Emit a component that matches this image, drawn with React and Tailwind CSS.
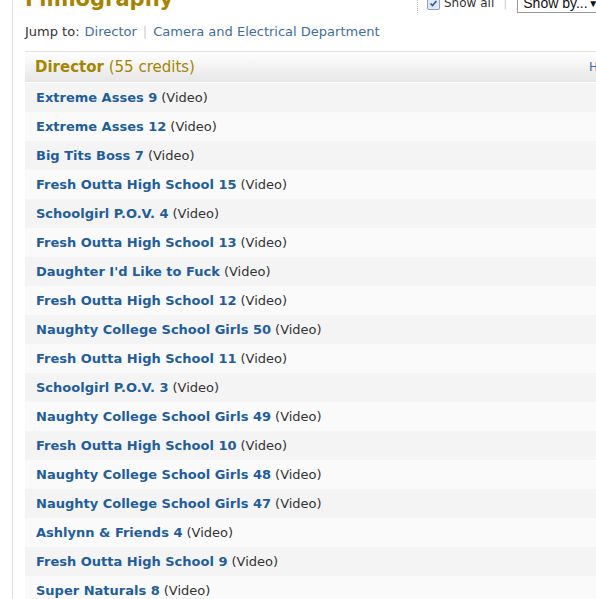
import React from "react";

const credits = [
  "Extreme Asses 9",
  "Extreme Asses 12",
  "Big Tits Boss 7",
  "Fresh Outta High School 15",
  "Schoolgirl P.O.V. 4",
  "Fresh Outta High School 13",
  "Daughter I'd Like to Fuck",
  "Fresh Outta High School 12",
  "Naughty College School Girls 50",
  "Fresh Outta High School 11",
  "Schoolgirl P.O.V. 3",
  "Naughty College School Girls 49",
  "Fresh Outta High School 10",
  "Naughty College School Girls 48",
  "Naughty College School Girls 47",
  "Ashlynn & Friends 4",
  "Fresh Outta High School 9",
  "Super Naturals 8",
];

export default function App() {
  return (
    <div className="h-[599px] w-[596px] overflow-hidden bg-white font-['DejaVu_Sans',Verdana,sans-serif]">
      <div className="ml-[12px] h-full border-l border-[#e4e4e4] pl-[12px]">
        <div className="relative flex h-[20px] items-end">
          <h1 className="absolute top-[-13px] left-0 text-[21px] font-bold leading-[24px] text-[#a58500]">
            Filmography
          </h1>
          <div className="absolute top-[-7px] left-[392px] flex items-center whitespace-nowrap border-l border-dotted border-[#bbb] pl-[9px]">
            <span className="flex h-[13px] w-[13px] items-center justify-center rounded-[2px] border border-[#8ba4c6] bg-[#dfe9f5]">
              <svg width="9" height="9" viewBox="0 0 9 9">
                <path d="M1.5 4.5 L3.5 6.5 L7.5 2" stroke="#2a5a9a" strokeWidth="1.6" fill="none" />
              </svg>
            </span>
            <span className="ml-[4px] text-[12px] text-[#333]">Show all</span>
            <span className="ml-[9px] text-[12px] text-[#ccc]">|</span>
            <span className="ml-[10px] flex h-[20px] w-[84px] items-center justify-between border border-[#999] bg-white pl-[5px] pr-[2px] text-[14px] text-[#111] font-['Liberation_Sans',Arial,sans-serif]">
              Show by...
              <span className="text-[10px]">▼</span>
            </span>
          </div>
        </div>
        <div className="flex h-[23px] items-center whitespace-nowrap text-[13px] text-[#333]">
          <span>Jump to:</span>
          <a className="ml-[5px] text-[#3b6ea6]">Director</a>
          <span className="mx-[6px] text-[#ccc]">|</span>
          <a className="text-[#3b6ea6]">Camera and Electrical Department</a>
        </div>
        <div className="mt-[8px] border-t border-[#e0e0e0]">
          <div className="flex h-[30px] items-center justify-between bg-gradient-to-b from-white to-[#e6e6e6] pl-[10px]">
            <div className="text-[15px] text-[#a58500]">
              <span className="font-bold">Director</span> (55 credits)
            </div>
            <span className="mr-[-2px] text-[12px] text-[#3b6ea6]">H</span>
          </div>
          <div className="mt-[1px]">
            {credits.map((t, i) => (
              <div
                key={i}
                className={`flex h-[29px] items-center whitespace-nowrap pl-[11px] text-[13px] ${
                  i % 2 === 0 ? "bg-[#f4f4f4]" : "bg-[#fafafa]"
                }`}
              >
                <a className="font-bold text-[#1f5e9e]">{t}</a>
                <span className="ml-[4px] text-[#333]">(Video)</span>
              </div>
            ))}
          </div>
        </div>
      </div>
    </div>
  );
}
